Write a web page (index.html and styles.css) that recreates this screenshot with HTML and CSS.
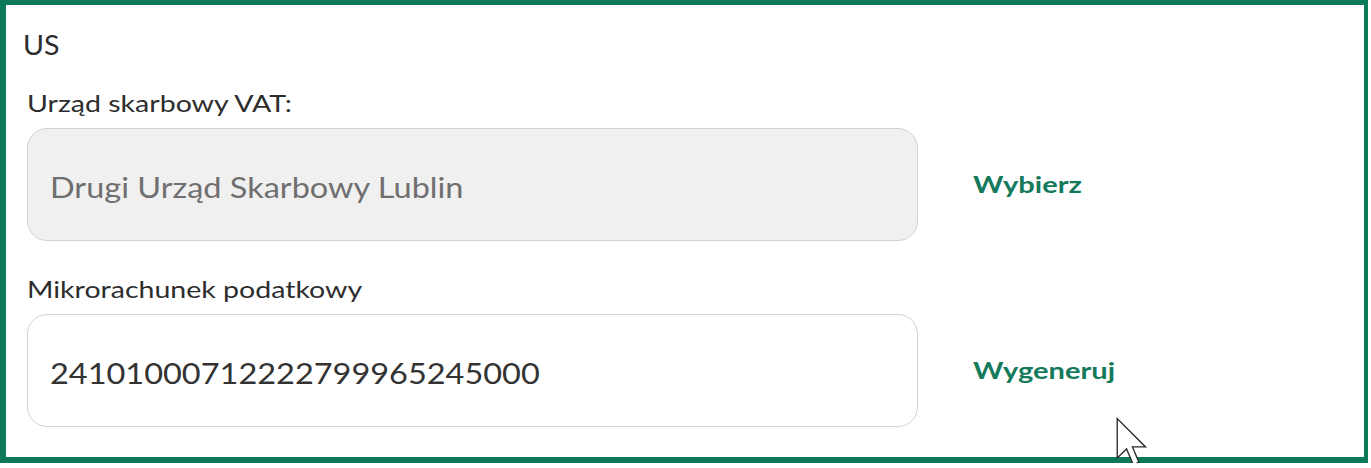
FILE: index.html
```html
<!DOCTYPE html>
<html lang="pl">
<head>
    <meta charset="UTF-8">
    <title>US</title>
    <link rel="stylesheet" href="styles.css">
</head>
<body>
    <div class="panel">
        <div class="panel-title"><span class="wide">US</span></div>

        <div class="field">
            <div class="field-label"><span class="wide">Urząd skarbowy VAT:</span></div>
            <div class="field-row">
                <div class="input-box readonly"><span class="wide">Drugi Urząd Skarbowy Lublin</span></div>
                <a class="action-link" href="#">Wybierz</a>
            </div>
        </div>

        <div class="field">
            <div class="field-label"><span class="wide">Mikrorachunek podatkowy</span></div>
            <div class="field-row">
                <div class="input-box"><span class="wide">24101000712222799965245000</span></div>
                <a class="action-link" href="#">Wygeneruj</a>
            </div>
        </div>

        <svg class="cursor" width="32" height="50" viewBox="0 0 13 20">
            <path d="M0.5 0.5 L0.5 16.5 L4.3 12.8 L7 19.2 L9.3 18.2 L6.7 12 L12 12 Z" fill="#fff" stroke="#2b2b2b" stroke-width="0.55" stroke-linejoin="miter"/>
        </svg>
    </div>
</body>
</html>
```

FILE: styles.css
```css
* {
    margin: 0;
    padding: 0;
    box-sizing: border-box;
}

body {
    font-family: Lato, 'Open Sans', sans-serif;
    background: #fff;
    color: #2d2d2d;
}

/* the screenshot text is a bit stretched sideways */
.wide {
    display: inline-block;
    transform-origin: left center;
    white-space: nowrap;
}

.panel {
    position: relative;
    width: 1368px;
    height: 463px;
    border: 6px solid #0c7a59;
    border-right-width: 4px;
    border-top-width: 5px;
    padding: 24px 16px 0 17px;
}

.panel-title {
    font-size: 26px;
    line-height: 32px;
    margin-bottom: 28px;
}

.panel-title .wide {
    transform: scaleX(1.1);
}

.field {
    padding-left: 4px;
    margin-bottom: 34px;
}

.field-label {
    font-size: 23px;
    line-height: 28px;
    margin-bottom: 11px;
}

.field-label .wide {
    transform: scaleX(1.24);
}

.field-row {
    display: flex;
    align-items: center;
}

.input-box {
    width: 891px;
    height: 113px;
    border: 1.5px solid #d2d2d2;
    border-radius: 20px;
    padding: 4px 22px 0;
    display: flex;
    align-items: center;
    font-size: 28px;
    color: #333;
    background: #fff;
}

.input-box .wide {
    transform: scaleX(1.16);
}

.input-box.readonly {
    background: #f0f0f0;
    color: #6f6f6f;
}

.action-link {
    display: inline-block;
    margin-left: 55px;
    font-size: 22px;
    font-weight: bold;
    color: #157a5c;
    text-decoration: none;
    transform: scaleX(1.32);
    transform-origin: left center;
}

.cursor {
    position: absolute;
    left: 1110px;
    top: 412px;
}
```
